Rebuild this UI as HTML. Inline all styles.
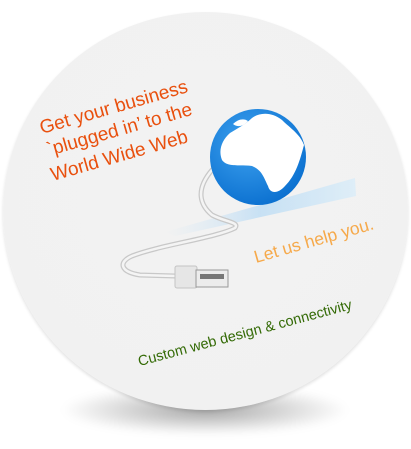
<!DOCTYPE html>
<html><head><style>
html,body{margin:0;padding:0;background:#fff;width:411px;height:449px;overflow:hidden;position:relative;font-family:"Liberation Sans",sans-serif}
.shadow{position:absolute;left:60px;top:385px;width:290px;height:50px;border-radius:50%;background:radial-gradient(ellipse at center,rgba(0,0,0,.35),rgba(0,0,0,0) 70%);filter:blur(4px)}
.disc{position:absolute;left:3px;top:12px;width:405px;height:398px;border-radius:50%;background:radial-gradient(circle at 50% 45%,#f2f2f2 0,#f1f1f1 85%,#e9e9e9 97%,#dcdcdc 100%);box-shadow:0 2px 3px rgba(0,0,0,.12)}
.t{position:absolute;white-space:nowrap;transform-origin:0 80%;height:20px;line-height:20px}
</style></head><body>
<div class="shadow"></div>
<div class="disc"></div>
<svg style="position:absolute;left:0;top:0" width="411" height="449">
<defs>
<radialGradient id="g" cx="40%" cy="35%" r="70%"><stop offset="0" stop-color="#3fa3f0"/><stop offset="1" stop-color="#0a6fcf"/></radialGradient>
<linearGradient id="s" x1="0" y1="0" x2="1" y2="0"><stop offset="0" stop-color="#cfe6f7" stop-opacity="0"/><stop offset=".5" stop-color="#b5d9f4"/><stop offset="1" stop-color="#d6ecfa"/></linearGradient>
</defs>
<path d="M165 232 L355 178 L356 196 L175 236 Z" fill="url(#s)" opacity=".7"/>
<path d="M212 170 C195 190 200 205 212 215 C225 222 240 222 235 228 C215 238 160 245 132 256 C118 262 120 272 140 275 L175 276" fill="none" stroke="#c8c8c8" stroke-width="5" stroke-linecap="round"/>
<path d="M212 170 C195 190 200 205 212 215 C225 222 240 222 235 228 C215 238 160 245 132 256 C118 262 120 272 140 275 L175 276" fill="none" stroke="#f4f4f4" stroke-width="2.5" stroke-linecap="round"/>
<rect x="175" y="266" width="22" height="22" rx="2" fill="#e6e6e6" stroke="#c4c4c4"/>
<rect x="196" y="270" width="32" height="17" fill="#ececec" stroke="#999"/>
<rect x="200" y="274" width="24" height="5" fill="#777"/>
<circle cx="258" cy="157" r="48" fill="url(#g)"/>
<path d="M252 118 C260 112 272 112 282 120 C290 128 300 134 304 145 C300 160 296 175 285 186 C278 194 270 194 268 186 C264 178 262 170 252 166 C240 164 228 168 222 160 C218 150 222 140 230 133 C238 128 246 124 252 118 Z" fill="#fff"/>
<path d="M233 124 C238 119 244 118 248 121 C244 126 238 128 233 124Z" fill="#fff"/>
</svg>
<div class="t" style="left:42px;top:119px;font-size:19px;color:#e9500e;transform:rotate(-16deg)">Get your business</div>
<div class="t" style="left:49px;top:141px;font-size:19px;color:#e9500e;transform:rotate(-16deg)">&#96;plugged in&#8217; to the</div>
<div class="t" style="left:53px;top:166px;font-size:19px;color:#e9500e;transform:rotate(-16deg)">World Wide Web</div>
<div class="t" style="left:256px;top:247px;font-size:17.5px;color:#f6a94a;transform:rotate(-16deg)">Let us help you.</div>
<div class="t" style="left:140px;top:352px;font-size:14.5px;color:#336a05;transform:rotate(-15deg)">Custom web design &amp; connectivity</div>
</body></html>
